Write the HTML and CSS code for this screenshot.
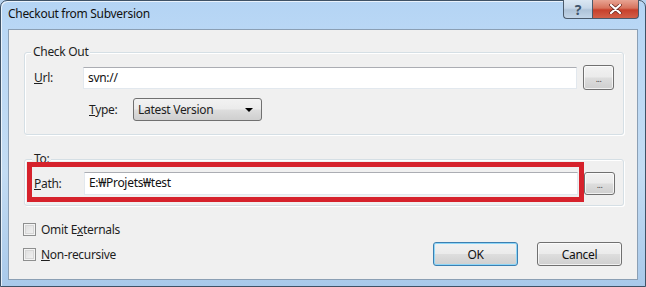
FILE: index.html
```html
<!DOCTYPE html>
<html>
<head>
<meta charset="utf-8">
<link rel="stylesheet" href="styles.css">
</head>
<body>
<div class="window">
  <div class="titlebar">
    <div class="title">Checkout from Subversion</div>
    <div class="caption-buttons">
      <div class="cap-btn help">?</div>
      <div class="cap-btn close">
        <svg width="13" height="10" viewBox="0 0 13 10"><path d="M2 1 L11 9 M11 1 L2 9" stroke="#6a2a22" stroke-width="3.6" stroke-linecap="round"/><path d="M2 1 L11 9 M11 1 L2 9" stroke="#fff" stroke-width="2.2" stroke-linecap="round"/></svg>
      </div>
    </div>
  </div>
  <div class="client">
    <div class="group g1">
      <div class="legend">Check Out</div>
      <div class="row url-row">
        <label class="lbl"><u>U</u>rl:</label>
        <div class="textbox url-box">svn://</div>
        <div class="btn browse">...</div>
      </div>
      <div class="row type-row">
        <label class="lbl type-lbl"><u>T</u>ype:</label>
        <div class="select">
          <span>Latest Version</span>
          <svg width="8" height="4" viewBox="0 0 8 4"><path d="M0 0 L8 0 L4 4 Z" fill="#000"/></svg>
        </div>
      </div>
    </div>
    <div class="group g2">
      <div class="legend">To:</div>
      <div class="row path-row">
        <div class="redbox">
          <label class="lbl"><u>P</u>ath:</label>
          <div class="textbox path-box">E:₩Projets₩test</div>
        </div>
        <div class="btn browse browse2">...</div>
      </div>
    </div>
    <div class="bottom">
      <div class="checks">
        <div class="check"><span class="cb"></span><span>Omit E<u>x</u>ternals</span></div>
        <div class="check"><span class="cb"></span><span><u>N</u>on-recursive</span></div>
      </div>
      <div class="buttons">
        <div class="btn push ok">OK</div>
        <div class="btn push">Cancel</div>
      </div>
    </div>
  </div>
</div>
</body>
</html>
```
FILE: styles.css
```css
* { box-sizing: border-box; }
html, body { margin: 0; padding: 0; }
body {
  width: 646px; height: 287px; overflow: hidden;
  font-family: "Noto Sans", "Open Sans", sans-serif;
  font-size: 12px; letter-spacing: -0.3px; color: #1e1e1e;
  background: #b7d3ef;
}
.window {
  width: 646px; height: 287px;
  border: 1px solid #3f5266;
  border-radius: 7px 7px 0 0;
  background: linear-gradient(180deg, #b4d4f4 0%, #b9d7f5 10%, #c3dcf3 60%, #a9c9ea 100%);
  box-shadow: inset 1px 1px 0 rgba(255,255,255,0.7);
  display: flex; flex-direction: column;
}
.titlebar {
  height: 28px; flex: none;
  display: flex; justify-content: space-between; align-items: flex-start;
  padding-left: 7px;
}
.title { padding-top: 4px; color: #111; }
.caption-buttons { display: flex; margin-right: 6px; margin-top: -1px; }
.cap-btn {
  height: 19px;
  display: flex; align-items: center; justify-content: center;
  border: 1px solid #4b5a6b;
  border-top: none;
}
.help {
  width: 29px;
  border-radius: 0 0 0 4px;
  background: linear-gradient(180deg, #dbe7f3 0%, #c7d7e8 45%, #aec3d8 55%, #c2d5e8 100%);
  color: #40546a; font-size: 14px; font-weight: bold;
  border-right: none;
}
.close {
  width: 47px;
  border-radius: 0 0 4px 0;
  background: linear-gradient(180deg, #e8a493 0%, #d7735d 45%, #c7402b 55%, #d35f48 100%);
}
.client {
  margin: 0 7px;
  height: 251px; flex: none;
  border: 1px solid #8b9fb4;
  background: #f0f0f0;
  padding: 22px 0 0 15px;
}
.group {
  width: 600px;
  border: 1px solid #d5dfe5;
  border-radius: 3px;
  box-shadow: inset 1px 1px 0 #fff, 1px 1px 0 #fff;
}
.legend {
  width: fit-content;
  margin: -8px 0 0 6px;
  padding: 0 2px;
  line-height: 14px; height: 14px;
  background: #f0f0f0;
}
.g1 { height: 83px; padding-left: 9px; }
.g1 .legend { margin-bottom: 6px; margin-left: -3px; }
.row { display: flex; align-items: center; }
.lbl { display: block; }
.url-row { height: 25px; }
.url-row .lbl { width: 49px; }
.textbox {
  height: 22px;
  background: #fff;
  border: 1px solid #e2e8ee;
  border-top-color: #abadb3;
  padding: 2px 0 0 4px;
  line-height: 16px;
  color: #111;
}
.url-box { width: 494px; }
.btn {
  display: flex; align-items: center; justify-content: center;
  border: 1px solid #707070;
  border-radius: 3px;
  background: linear-gradient(180deg, #f2f2f2 0%, #ebebeb 48%, #dddddd 52%, #cfcfcf 100%);
  box-shadow: inset 0 0 0 1px rgba(255,255,255,0.7);
}
.browse {
  width: 31px; height: 25px;
  margin-left: 6px;
  font-size: 9px; color: #444; letter-spacing: -0.5px;
  padding-top: 2px;
}
.type-row { padding-left: 55px; margin-top: 8px; }
.type-lbl { width: 44px; }
.select {
  width: 129px; height: 23px;
  border: 1px solid #707070; border-radius: 3px;
  background: linear-gradient(180deg, #f2f2f2 0%, #ebebeb 48%, #dddddd 52%, #cfcfcf 100%);
  display: flex; align-items: center; justify-content: space-between;
  padding: 0 8px 0 4px;
}
.g2 { height: 47px; margin-top: 24px; padding-left: 2px; }
.g2 .legend { margin-bottom: -4px; margin-left: 5px; }
.path-row { align-items: flex-start; }
.redbox {
  width: 557px; height: 40px;
  border: 5px solid #d6222c;
  display: flex; align-items: flex-end;
  padding: 0 0 2px 2px;
}
.redbox .lbl { width: 50px; padding-bottom: 3px; }
.path-box { width: 494px; height: 23px; margin-right: -2px; }
.browse2 { margin-left: 0; height: 23px; margin-top: 10px; }
.bottom {
  display: flex; justify-content: space-between;
  margin-top: 17px; width: 600px;
}
.checks { display: flex; flex-direction: column; gap: 12px; margin-left: -1px; }
.check { display: flex; align-items: center; gap: 5px; height: 13px; }
.cb {
  width: 13px; height: 13px; flex: none;
  border: 1px solid #8e8f8f;
  background: linear-gradient(135deg, #dcdcdc 0%, #f4f4f4 100%);
  box-shadow: inset 0 0 0 1px #f4f4f4, inset 0 0 0 2px #d6d6d6;
}
.buttons { display: flex; gap: 19px; margin-top: 19px; margin-right: 2px; }
.push { width: 85px; height: 24px; color: #111; }
.ok { border-color: #3c7fb1; box-shadow: inset 0 0 0 1px #8ed6f7; }
```
